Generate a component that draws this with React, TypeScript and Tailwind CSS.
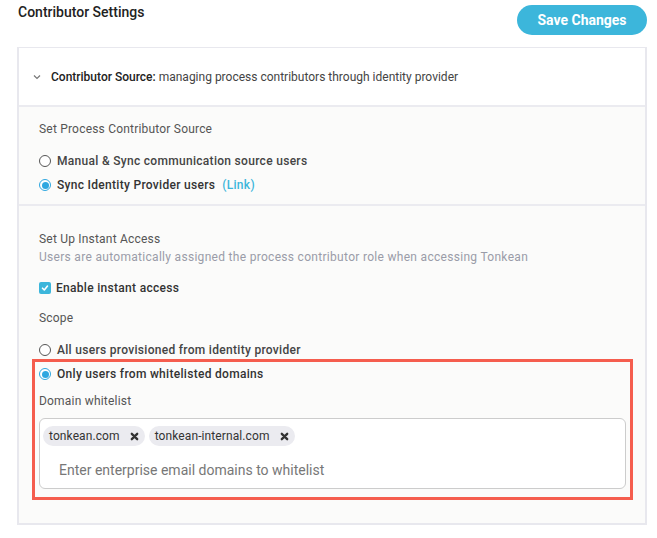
import React from "react";

function Radio({ checked }: { checked?: boolean }) {
  return checked ? (
    <span className="w-[12px] h-[12px] rounded-full border border-[#2ea7e0] flex items-center justify-center bg-white shrink-0">
      <span className="w-[7px] h-[7px] rounded-full bg-[#2ea7e0]" />
    </span>
  ) : (
    <span className="w-[12px] h-[12px] rounded-full border border-[#555] bg-white shrink-0" />
  );
}

function Chip({ label }: { label: string }) {
  return (
    <span className="h-[20px] rounded-full bg-[#ebebf0] flex items-center pl-[6px] pr-[6px] gap-[10px] text-[12px] text-[#333] tracking-[0.1px]">
      <span>{label}</span>
      <svg width="9" height="9" viewBox="0 0 10 10">
        <path d="M2 2 L8 8 M8 2 L2 8" stroke="#333" strokeWidth="2.6" strokeLinecap="round" />
      </svg>
    </span>
  );
}

export default function App() {
  return (
    <div className="w-[657px] h-[538px] bg-white font-['Roboto',sans-serif] relative">
      <div className="flex justify-between items-start pl-[18px] pr-[10px] pt-[5px]">
        <div className="text-[14px] leading-[16px] font-medium text-[#222] mt-[-1px]">Contributor Settings</div>
        <button className="h-[30px] w-[130px] rounded-full bg-[#3cb6db] text-white text-[14px] font-bold">
          Save Changes
        </button>
      </div>
      <div className="ml-[17px] w-[630px] mt-[12px] border-2 border-t border-[#e8e8ee] bg-[#fbfbfa]">
        <div className="h-[57px] bg-white flex items-center pl-[14px] text-[12px] text-[#444]">
          <svg width="8" height="6" viewBox="0 0 8 6" className="mr-[10px]">
            <path d="M1 1.5 L4 4.5 L7 1.5" stroke="#777" strokeWidth="1.2" fill="none" />
          </svg>
          <span className="font-medium text-[#222]">Contributor Source:</span>
          <span className="ml-[3px]">managing process contributors through identity provider</span>
        </div>
        <div className="border-t-2 border-[#ebebf0] pl-[20px] pr-[19px] pt-[14px] pb-[11px]">
          <div className="text-[12px] leading-[16px] text-[#555] tracking-[0.2px]">Set Process Contributor Source</div>
          <div className="mt-[16px] flex items-center gap-[6px] h-[16px] text-[12px] font-medium text-[#444] tracking-[0.3px]">
            <Radio />
            <span>Manual &amp; Sync communication source users</span>
          </div>
          <div className="mt-[8px] flex items-center gap-[6px] h-[16px] text-[12px] font-medium text-[#333] tracking-[0.3px]">
            <Radio checked />
            <span>Sync Identity Provider users</span>
            <span className="ml-[1px] text-[#3cb6db]">(Link)</span>
          </div>
        </div>
        <div className="border-t-2 border-[#ebebf0] pl-[20px] pr-[19px] pt-[24px] pb-[23px]">
          <div className="text-[12px] leading-[18px] text-[#555] tracking-[0.2px]">Set Up Instant Access</div>
          <div className="text-[12px] leading-[18px] text-[#9a9ca8] tracking-[0.3px]">
            Users are automatically assigned the process contributor role when accessing Tonkean
          </div>
          <div className="mt-[14px] flex items-center gap-[5px] h-[16px] text-[12px] font-medium text-[#333] tracking-[0.3px]">
            <span className="w-[12px] h-[12px] rounded-[2px] bg-[#3cb6db] flex items-center justify-center">
              <svg width="8" height="8" viewBox="0 0 8 8">
                <path d="M1.5 4.2 L3.3 6 L6.5 2" stroke="white" strokeWidth="1.6" fill="none" strokeLinecap="round" strokeLinejoin="round" />
              </svg>
            </span>
            <span>Enable instant access</span>
          </div>
          <div className="mt-[14px] text-[12px] leading-[16px] text-[#555] tracking-[0.2px]">Scope</div>
          <div className="mt-[16px] flex items-center gap-[6px] h-[16px] text-[12px] font-medium text-[#444] tracking-[0.3px]">
            <Radio />
            <span>All users provisioned from identity provider</span>
          </div>
          <div className="-mx-[7px] mt-[1px] border-[3px] border-[#f55d4e] px-[4px] pt-[4px] pb-[8px]">
            <div className="flex items-center gap-[6px] h-[16px] text-[12px] font-medium text-[#333] tracking-[0.3px]">
              <Radio checked />
              <span>Only users from whitelisted domains</span>
            </div>
            <div className="mt-[11px] text-[12px] leading-[16px] text-[#555] tracking-[0.2px]">Domain whitelist</div>
            <div className="mt-[9px] h-[71px] border border-[#cccccc] rounded-[6px] bg-white pl-[3px] pt-[7px]">
              <div className="flex gap-[4px]">
                <Chip label="tonkean.com" />
                <Chip label="tonkean-internal.com" />
              </div>
              <div className="mt-[14px] pl-[16px] text-[14px] leading-[20px] text-[#777]">
                Enter enterprise email domains to whitelist
              </div>
            </div>
          </div>
        </div>
      </div>
    </div>
  );
}
